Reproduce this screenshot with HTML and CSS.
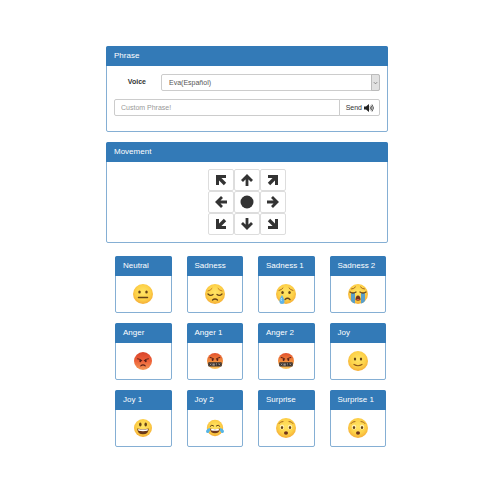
FILE: index.html
```html
<!DOCTYPE html>
<html lang="en">
<head>
<meta charset="utf-8">
<title>Robot control</title>
<link rel="stylesheet" href="styles.css">
</head>
<body>
<svg class="defs" aria-hidden="true">
  <defs>
    <radialGradient id="yellow" cx="50%" cy="42%" r="62%">
      <stop offset="0" stop-color="#ffe566"/><stop offset=".6" stop-color="#fdd148"/><stop offset="1" stop-color="#f3a634"/>
    </radialGradient>
    <linearGradient id="red" x1="0" y1="0" x2="0" y2="1">
      <stop offset="0" stop-color="#d8432b"/><stop offset=".5" stop-color="#ee6139"/><stop offset="1" stop-color="#f29a58"/>
    </linearGradient>
    <linearGradient id="orange" x1="0" y1="0" x2="0" y2="1">
      <stop offset="0" stop-color="#e2502e"/><stop offset=".5" stop-color="#f28a3c"/><stop offset="1" stop-color="#fbc458"/>
    </linearGradient>
    <symbol id="neutral" viewBox="0 0 40 40">
      <circle cx="20" cy="20" r="20" fill="url(#yellow)"/>
      <ellipse cx="13" cy="16" rx="2.5" ry="3" fill="#664317"/><ellipse cx="27" cy="16" rx="2.5" ry="3" fill="#664317"/>
      <path d="M11 27h18" stroke="#664317" stroke-width="3" stroke-linecap="round"/>
    </symbol>
    <symbol id="pensive" viewBox="0 0 40 40">
      <circle cx="20" cy="20" r="20" fill="url(#yellow)"/>
      <path d="M6 14q5-1 8-5M34 14q-5-1-8-5" fill="none" stroke="#c27a20" stroke-width="2" stroke-linecap="round"/>
      <path d="M6 20q5 5 10 1M34 20q-5 5-10 1M15 32q5-4 10 0" fill="none" stroke="#664317" stroke-width="2.6" stroke-linecap="round"/>
    </symbol>
    <symbol id="tear" viewBox="0 0 40 40">
      <circle cx="20" cy="20" r="20" fill="url(#yellow)"/>
      <path d="M6 13q5-1 8-5M34 13q-5-1-8-5" fill="none" stroke="#a66a20" stroke-width="2" stroke-linecap="round"/>
      <ellipse cx="13" cy="17" rx="2.5" ry="3" fill="#664317"/><ellipse cx="27" cy="17" rx="2.5" ry="3" fill="#664317"/>
      <path d="M18 31q5-5 10 0" fill="none" stroke="#664317" stroke-width="2.6" stroke-linecap="round"/>
      <path d="M12 22q-6 9-5 13a5 5 0 0 0 10 0q0-4-5-13z" fill="#5db3ea"/><path d="M11 28q-2 4 0 6" fill="none" stroke="#b6e2fb" stroke-width="2"/>
    </symbol>
    <symbol id="sob" viewBox="0 0 40 40">
      <circle cx="20" cy="20" r="20" fill="url(#yellow)"/>
      <path d="M7 10q5 0 8-4M33 10q-5 0-8-4" fill="none" stroke="#a66a20" stroke-width="2" stroke-linecap="round"/>
      <path d="M6 18h8v21q-5-1-8-5zM26 18h8v16q-3 4-8 5z" fill="#5a9fc8"/>
      <path d="M4 16q6 4 12 0M36 16q-6 4-12 0" fill="none" stroke="#664317" stroke-width="2.6" stroke-linecap="round"/>
      <path d="M15 32q0-9 5-9t5 9q-5 3-10 0z" fill="#70341c"/><path d="M16 32q4-4 8 0z" fill="#e9574b"/>
    </symbol>
    <symbol id="angry" viewBox="0 0 40 40">
      <circle cx="20" cy="20" r="20" fill="url(#red)"/>
      <path d="M8 15q6 1 9 4M32 15q-6 1-9 4" fill="none" stroke="#5c2018" stroke-width="2.4" stroke-linecap="round"/>
      <ellipse cx="14" cy="20" rx="2.2" ry="3" fill="#5c2018"/><ellipse cx="26" cy="20" rx="2.2" ry="3" fill="#5c2018"/>
      <path d="M15 31q5-5 10 0" fill="none" stroke="#5c2018" stroke-width="2.4" stroke-linecap="round"/>
    </symbol>
    <symbol id="cursing" viewBox="0 0 40 40">
      <circle cx="20" cy="20" r="20" fill="url(#orange)"/>
      <path d="M8 11q6 1 9 4M32 11q-6 1-9 4" fill="none" stroke="#5c2018" stroke-width="2.6" stroke-linecap="round"/>
      <ellipse cx="14" cy="17" rx="2.3" ry="3" fill="#5c2018"/><ellipse cx="26" cy="17" rx="2.3" ry="3" fill="#5c2018"/>
      <rect x="3" y="23" width="34" height="11" rx="2" fill="#37302e"/>
      <path d="M7 26l4 5m0-5l-4 5M15 26v6m3-6v6m-4-4h5m-5 2h5M25 26q-3 0-2 2t1 3M29 26l4 5m0-5l-4 4" fill="none" stroke="#c9beb8" stroke-width="1.3"/>
    </symbol>
    <symbol id="smile" viewBox="0 0 40 40">
      <circle cx="20" cy="20" r="20" fill="url(#yellow)"/>
      <ellipse cx="14" cy="16" rx="2.3" ry="3" fill="#664317"/><ellipse cx="26" cy="16" rx="2.3" ry="3" fill="#664317"/>
      <path d="M12 27q8 5 16 0" fill="none" stroke="#8a541a" stroke-width="2.4" stroke-linecap="round"/>
    </symbol>
    <symbol id="grin" viewBox="0 0 40 40">
      <circle cx="20" cy="20" r="20" fill="url(#yellow)"/>
      <ellipse cx="14" cy="12" rx="2.8" ry="4.5" fill="#664317"/><ellipse cx="26" cy="12" rx="2.8" ry="4.5" fill="#664317"/>
      <path d="M7 21q13 3 26 0q-1 13-13 13t-13-13z" fill="#6b3818"/><path d="M9 22q11 3 22 0l-1 4q-10 2-20 0z" fill="#fff"/>
    </symbol>
    <symbol id="laugh" viewBox="0 0 44 40">
      <circle cx="22" cy="20" r="20" fill="url(#yellow)"/>
      <path d="M10 16q4-6 9-1M34 16q-4-6-9-1" fill="none" stroke="#664317" stroke-width="2.4" stroke-linecap="round"/>
      <path d="M10 21q12 3 24 0q-1 12-12 12t-12-12z" fill="#70381c"/><path d="M12 22q10 2 20 0l-1 4q-9 2-18 0z" fill="#fff"/>
      <path d="M10 20q-9 2-10 8q1 6 6 4q5-3 4-12zM34 20q9 2 10 8q-1 6-6 4q-5-3-4-12z" fill="#55b5e6"/>
    </symbol>
    <symbol id="hushed" viewBox="0 0 40 40">
      <circle cx="20" cy="20" r="20" fill="url(#yellow)"/>
      <path d="M6 11q2-4 8-4M34 11q-2-4-8-4" fill="none" stroke="#a66a20" stroke-width="2" stroke-linecap="round"/>
      <ellipse cx="12" cy="18" rx="4.5" ry="5" fill="#fff0b0"/><ellipse cx="28" cy="18" rx="4.5" ry="5" fill="#fff0b0"/>
      <ellipse cx="12" cy="19" rx="2.3" ry="3" fill="#664317"/><ellipse cx="28" cy="19" rx="2.3" ry="3" fill="#664317"/>
      <ellipse cx="20" cy="30" rx="4" ry="3.6" fill="#70341c"/>
    </symbol>
    <symbol id="arrow" viewBox="0 0 14 14">
      <path d="M7 13V3M2 8l5-5 5 5" fill="none" stroke="#333" stroke-width="2.8"/>
    </symbol>
    <symbol id="corner" viewBox="0 0 14 14">
      <path d="M11 11L5 5" fill="none" stroke="#333" stroke-width="3.4"/>
      <path d="M2 2h10v3H5v7H2z" fill="#333"/>
    </symbol>
  </defs>
</svg>

<main class="page">
  <section class="panel">
    <h2 class="panel-title">Phrase</h2>
    <form class="phrase-form">
      <div class="voice-row">
        <label class="voice-label" for="voice">Voice</label>
        <div class="select-wrap">
          <select class="field" id="voice"><option>Eva(Español)</option></select>
          <span class="select-arrow"><svg viewBox="0 0 6 4" width="5" height="4"><path d="M1 1l2 2 2-2" fill="none" stroke="#777"/></svg></span>
        </div>
      </div>
      <div class="input-group">
        <input class="field" type="text" placeholder="Custom Phrase!" aria-label="Custom phrase">
        <button class="send" type="button">Send
          <svg viewBox="0 0 20 16" width="10" height="8"><path d="M0 5h4l6-5v16l-6-5H0z" fill="#222"/><path d="M12 5q2 3 0 6M14 3q4 5 0 10M16 1q6 7 0 14" fill="none" stroke="#222" stroke-width="1.5"/></svg>
        </button>
      </div>
    </form>
  </section>

  <section class="panel">
    <h2 class="panel-title">Movement</h2>
    <div class="movement">
      <div class="pad">
        <button class="key" aria-label="Up left"><svg><use href="#corner"/></svg></button>
        <button class="key" aria-label="Up"><svg><use href="#arrow"/></svg></button>
        <button class="key" aria-label="Up right"><svg class="turn-right"><use href="#corner"/></svg></button>
        <button class="key" aria-label="Left"><svg class="turn-left"><use href="#arrow"/></svg></button>
        <button class="key" aria-label="Centre"><svg viewBox="0 0 14 14"><circle cx="7" cy="7" r="6.5" fill="#333"/></svg></button>
        <button class="key" aria-label="Right"><svg class="turn-right"><use href="#arrow"/></svg></button>
        <button class="key" aria-label="Down left"><svg class="turn-left"><use href="#corner"/></svg></button>
        <button class="key" aria-label="Down"><svg class="turn-back"><use href="#arrow"/></svg></button>
        <button class="key" aria-label="Down right"><svg class="turn-back"><use href="#corner"/></svg></button>
      </div>
    </div>
  </section>

  <section class="cards">
    <article class="card"><h3 class="panel-title">Neutral</h3><button class="face" aria-label="Neutral"><svg><use href="#neutral"/></svg></button></article>
    <article class="card"><h3 class="panel-title">Sadness</h3><button class="face" aria-label="Sadness"><svg><use href="#pensive"/></svg></button></article>
    <article class="card"><h3 class="panel-title">Sadness 1</h3><button class="face" aria-label="Sadness 1"><svg><use href="#tear"/></svg></button></article>
    <article class="card"><h3 class="panel-title">Sadness 2</h3><button class="face" aria-label="Sadness 2"><svg><use href="#sob"/></svg></button></article>
    <article class="card"><h3 class="panel-title">Anger</h3><button class="face medium" aria-label="Anger"><svg><use href="#angry"/></svg></button></article>
    <article class="card"><h3 class="panel-title">Anger 1</h3><button class="face small" aria-label="Anger 1"><svg><use href="#cursing"/></svg></button></article>
    <article class="card"><h3 class="panel-title">Anger 2</h3><button class="face small" aria-label="Anger 2"><svg><use href="#cursing"/></svg></button></article>
    <article class="card"><h3 class="panel-title">Joy</h3><button class="face" aria-label="Joy"><svg><use href="#smile"/></svg></button></article>
    <article class="card"><h3 class="panel-title">Joy 1</h3><button class="face medium" aria-label="Joy 1"><svg><use href="#grin"/></svg></button></article>
    <article class="card"><h3 class="panel-title">Joy 2</h3><button class="face medium" aria-label="Joy 2"><svg><use href="#laugh"/></svg></button></article>
    <article class="card"><h3 class="panel-title">Surprise</h3><button class="face" aria-label="Surprise"><svg><use href="#hushed"/></svg></button></article>
    <article class="card"><h3 class="panel-title">Surprise 1</h3><button class="face" aria-label="Surprise 1"><svg><use href="#hushed"/></svg></button></article>
  </section>
</main>
</body>
</html>
```

FILE: styles.css
```css
* {
  box-sizing: border-box;
}

body {
  margin: 0;
  background: #fff;
  color: #333;
  font: 7px/10px "Liberation Sans", Arial, sans-serif;
}

button,
input,
select {
  margin: 0;
  font: inherit;
}

svg {
  display: block;
}

.defs {
  position: absolute;
  width: 0;
  height: 0;
}

.page {
  padding: 46px 112px 46px 106px;
}

.panel,
.card {
  border: 1px solid #85afd4;
  border-radius: 2px;
  background: #fff;
}

.panel {
  margin-bottom: 10px;
}

.panel-title {
  margin: -1px -1px 0;
  padding: 5px 8px;
  border-radius: 2px 2px 0 0;
  background: #337ab7;
  color: #fff;
  font-size: 8px;
  font-weight: 400;
  line-height: 10px;
}

.phrase-form {
  display: grid;
  gap: 8px;
  padding: 8px 7px 15px;
}

.voice-row {
  display: flex;
  gap: 15px;
}

.voice-label {
  width: 32px;
  padding-top: 3px;
  font-weight: 700;
  text-align: right;
}

.select-wrap {
  position: relative;
  flex: 1;
}

.field {
  display: block;
  width: 100%;
  height: 17px;
  padding: 0 7px;
  border: 1px solid #ccc;
  border-radius: 2px;
  background: #fff;
  color: #555;
  appearance: none;
}

.field::placeholder {
  color: #999;
  opacity: 1;
}

.select-arrow {
  position: absolute;
  top: 0;
  right: 0;
  bottom: 0;
  display: grid;
  place-items: center;
  width: 9px;
  border: 1px solid #bbb;
  border-radius: 0 2px 2px 0;
  background: #e1e1e1;
  pointer-events: none;
}

.input-group {
  display: flex;
}

.input-group .field {
  flex: 1;
  min-width: 0;
  padding: 0 6px;
  border-radius: 2px 0 0 2px;
}

.send {
  display: flex;
  align-items: center;
  gap: 2px;
  height: 17px;
  margin-left: -1px;
  padding: 0 5px 0 6px;
  border: 1px solid #ccc;
  border-radius: 0 2px 2px 0;
  background: #fff;
  color: #333;
}

.movement {
  display: flex;
  justify-content: center;
  padding: 7px;
}

.pad {
  display: grid;
  grid-template-columns: repeat(3, 26px);
  grid-auto-rows: 22px;
}

.key {
  display: grid;
  place-items: center;
  padding: 0;
  border: 1px solid #ddd;
  border-radius: 2px;
  background: #fff;
}

.key svg {
  width: 14px;
  height: 14px;
}

.turn-right {
  transform: rotate(90deg);
}

.turn-left {
  transform: rotate(-90deg);
}

.turn-back {
  transform: rotate(180deg);
}

.cards {
  display: grid;
  grid-template-columns: repeat(4, 1fr);
  gap: 10px 15px;
  padding: 3px 2px 0 9px;
}

.face {
  display: grid;
  place-items: center;
  width: 100%;
  height: 36px;
  padding: 0;
  border: 0;
  background: none;
}

.face svg {
  width: 20px;
  height: 20px;
}

.medium svg {
  width: 18px;
  height: 18px;
}

.small svg {
  width: 16px;
  height: 16px;
}
```
